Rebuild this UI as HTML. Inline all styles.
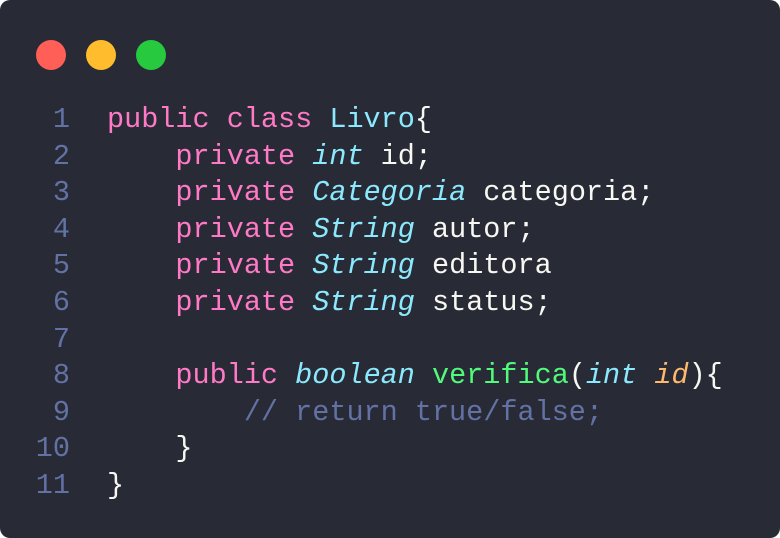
<!DOCTYPE html>
<html><head><meta charset="utf-8"><style>
html,body{margin:0;padding:0;background:#fff;}
.win{position:absolute;left:0;top:0;width:780px;height:538px;background:#282a36;border-radius:10px;overflow:hidden;}
.dot{position:absolute;top:40px;width:30px;height:30px;border-radius:50%;}
pre{position:absolute;left:0;top:102px;margin:0;font-family:"Liberation Mono",monospace;font-size:28.5px;line-height:36.6px;color:#f8f8f2;}
.ln{display:inline-block;width:70px;text-align:right;color:#6272a4;margin-right:37px;}
.k{color:#ff79c6}.t{color:#8be9fd;font-style:italic}.c{color:#8be9fd}.f{color:#50fa7b}.p{color:#ffb86c;font-style:italic}.cm{color:#6272a4}
</style></head><body><div class="win">
<div class="dot" style="left:36px;background:#ff5f56"></div>
<div class="dot" style="left:86px;background:#ffbd2e"></div>
<div class="dot" style="left:136px;background:#27c93f"></div>
<pre><span class="ln">1</span><span class="k">public class</span> <span class="c">Livro</span>{
<span class="ln">2</span>    <span class="k">private</span> <span class="t">int</span> id;
<span class="ln">3</span>    <span class="k">private</span> <span class="t">Categoria</span> categoria;
<span class="ln">4</span>    <span class="k">private</span> <span class="t">String</span> autor;
<span class="ln">5</span>    <span class="k">private</span> <span class="t">String</span> editora
<span class="ln">6</span>    <span class="k">private</span> <span class="t">String</span> status;
<span class="ln">7</span>
<span class="ln">8</span>    <span class="k">public</span> <span class="t">boolean</span> <span class="f">verifica</span>(<span class="t">int</span> <span class="p">id</span>){
<span class="ln">9</span>        <span class="cm">// return true/false;</span>
<span class="ln">10</span>    }
<span class="ln">11</span>}</pre>
</div></body></html>
